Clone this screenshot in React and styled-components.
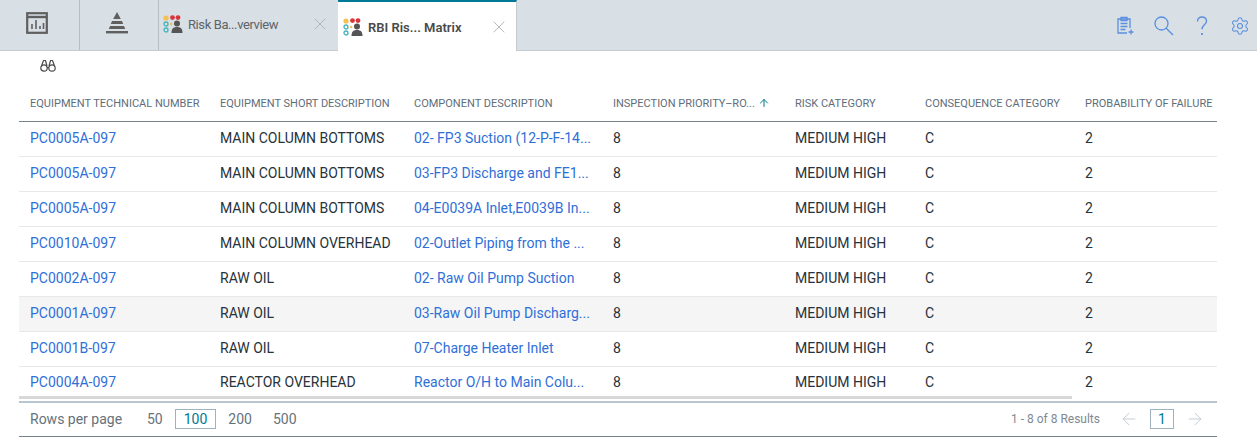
import React from 'react';
import styled, { createGlobalStyle } from 'styled-components';
import { X, ArrowLeft, ArrowRight, ArrowUp, Settings } from 'lucide-react';

const GlobalStyle = createGlobalStyle`
  html, body {
    margin: 0;
    padding: 0;
    background: #fff;
    font-family: Roboto, "Noto Sans", sans-serif;
  }
`;

const Page = styled.div`
  width: 1257px;
  height: 440px;
  overflow: hidden;
`;

const TabBar = styled.div`
  display: flex;
  height: 50px;
  background: #d8dfe5;
  border-bottom: 1px solid #c6cbcf;
`;

const IconTab = styled.div`
  width: ${p => p.$width}px;
  display: flex;
  align-items: center;
  justify-content: center;
  padding: 0 5px 4px 0;
  border-right: 1px solid #b9bdc0;
  color: #5f5f5f;
  box-sizing: border-box;
`;

const Tab = styled.div`
  display: flex;
  align-items: center;
  width: ${p => p.$width}px;
  height: ${p => (p.$active ? 51 : 50)}px;
  box-sizing: border-box;
  padding: ${p => (p.$active ? '1px 7px 0 5px' : '0 8px 2px 4px')};
  background: ${p => (p.$active ? '#fff' : 'transparent')};
  border-top: ${p => (p.$active ? '2px solid #007a94' : 'none')};
  border-right: ${p => (p.$active ? '1px solid #c6cbcf' : 'none')};
  color: ${p => (p.$active ? '#4a4a4a' : '#5d6468')};
  font-size: 13px;
  font-weight: ${p => (p.$active ? 600 : 400)};
  letter-spacing: ${p => (p.$active ? 0 : -0.4)}px;
`;

const TabTitle = styled.span`
  flex: 1;
  margin-left: 5px;
  white-space: nowrap;
`;

const TabClose = styled(X)`
  color: #a9adb0;
`;

const Actions = styled.div`
  margin-left: auto;
  display: flex;
  align-items: center;
  gap: 18px;
  padding: 1px 7px 0 0;
  color: #5b8fe0;
`;

const ToolRow = styled.div`
  height: 33px;
  padding: 7px 0 0 40px;
  box-sizing: border-box;
  color: #4a4a4a;
`;

const TableWrap = styled.div`
  margin-left: 19px;
  width: 1198px;
`;

const Table = styled.table`
  width: 1198px;
  table-layout: fixed;
  border-collapse: collapse;
`;

const HeadCell = styled.th`
  height: 37px;
  padding: 3px 0 0 11px;
  text-align: left;
  font-size: 11px;
  font-weight: 400;
  color: #5e6d7a;
  white-space: nowrap;
  border-bottom: 1px solid #77838c;
  box-sizing: border-box;
`;

const SortArrow = styled(ArrowUp)`
  color: #007a94;
  margin-left: 3px;
  vertical-align: -2px;
`;

const Row = styled.tr`
  background: ${p => (p.$hover ? '#f5f5f5' : '#fff')};
`;

const Cell = styled.td`
  height: ${p => (p.$last ? 30 : 35)}px;
  padding: ${p => (p.$last ? '2px 0 0 11px' : '0 0 2px 11px')};
  font-size: 14px;
  color: #27323a;
  white-space: nowrap;
  overflow: hidden;
  border-bottom: ${p => (p.$last ? 'none' : '1px solid #e6e8e9')};
  box-sizing: border-box;
`;

const LinkText = styled.span`
  color: #2f6fd8;
`;

const ScrollBar = styled.div`
  width: 1053px;
  height: 3px;
  background: #d8d8d8;
`;

const Footer = styled.div`
  display: flex;
  align-items: center;
  box-sizing: border-box;
  height: 36px;
  margin-top: 2px;
  padding: 0 12px 1px 11px;
  border-top: 2px solid #b9c6d0;
  border-bottom: 1px solid #70838f;
  font-size: 14px;
  color: #66727b;
`;

const PageSize = styled.span`
  box-sizing: border-box;
  height: 20px;
  line-height: 18px;
  padding: 0 8px;
  margin-right: 3px;
  border: 1px solid ${p => (p.$active ? '#9fb1bd' : 'transparent')};
  color: ${p => (p.$active ? '#007a94' : '#66727b')};
`;

const RowsLabel = styled.span`
  width: 108px;
`;

const Results = styled.span`
  margin-left: auto;
  margin-right: 19px;
  font-size: 12px;
  color: #808a92;
`;

const PageNum = styled.span`
  box-sizing: border-box;
  width: 24px;
  height: 20px;
  line-height: 18px;
  margin: 0 11px;
  text-align: center;
  color: #007a94;
  border: 1px solid #9fb1bd;
`;

const PageArrow = styled.span`
  display: flex;
  color: #c0c8ce;
`;

const columns = [
  { title: 'EQUIPMENT TECHNICAL NUMBER', width: 190 },
  { title: 'EQUIPMENT SHORT DESCRIPTION', width: 194 },
  { title: 'COMPONENT DESCRIPTION', width: 199 },
  { title: 'INSPECTION PRIORITY–RO...', width: 182, sorted: true },
  { title: 'RISK CATEGORY', width: 130 },
  { title: 'CONSEQUENCE CATEGORY', width: 160 },
  { title: 'PROBABILITY OF FAILURE', width: 143 }
];

const rows = [
  ['PC0005A-097', 'MAIN COLUMN BOTTOMS', '02- FP3 Suction (12-P-F-14...'],
  ['PC0005A-097', 'MAIN COLUMN BOTTOMS', '03-FP3 Discharge and FE1...'],
  ['PC0005A-097', 'MAIN COLUMN BOTTOMS', '04-E0039A Inlet,E0039B In...'],
  ['PC0010A-097', 'MAIN COLUMN OVERHEAD', '02-Outlet Piping from the ...'],
  ['PC0002A-097', 'RAW OIL', '02- Raw Oil Pump Suction'],
  ['PC0001A-097', 'RAW OIL', '03-Raw Oil Pump Discharg...'],
  ['PC0001B-097', 'RAW OIL', '07-Charge Heater Inlet'],
  ['PC0004A-097', 'REACTOR OVERHEAD', 'Reactor O/H to Main Colu...']
];

const ReportIcon = () => (
  <svg width="22" height="22" viewBox="0 0 22 22" fill="none" stroke="currentColor">
    <rect x="1.200" y="1.200" width="19.600" height="19.600" strokeWidth="2.200" />
    <path d="M1 5h20" strokeWidth="2.400" />
    <path d="M6 17v-5M10 17V8M14 17v-3M17.500 17v-6" strokeWidth="1.600" />
  </svg>
);

const PyramidIcon = () => (
  <svg width="24" height="22" viewBox="0 0 24 22" fill="currentColor">
    <path d="M12 0l3.800 7H8.200z" />
    <path d="M7 9h10l1.200 3H5.800z" />
    <path d="M5 14h14l1.200 3H3.800z" />
    <path d="M1 19h22v2.400H1z" />
  </svg>
);

const RiskIcon = () => (
  <svg width="20" height="18" viewBox="0 0 20 18">
    <circle cx="3" cy="3" r="2.600" fill="#f2c14e" />
    <circle cx="9.500" cy="2.600" r="2.400" fill="#d9343a" />
    <circle cx="15" cy="2.600" r="2.400" fill="#d9343a" />
    <circle cx="3" cy="9" r="2" fill="none" stroke="#45b5bd" strokeWidth="1.300" />
    <circle cx="3" cy="15" r="2" fill="none" stroke="#45b5bd" strokeWidth="1.300" />
    <circle cx="8.200" cy="9" r="1.300" fill="#f2c14e" />
    <circle cx="14" cy="8.500" r="3" fill="#555" />
    <path d="M8.500 18c0-4 1.500-6 5.500-6s5.500 2 5.500 6z" fill="#555" />
  </svg>
);

const BinocularsIcon = () => (
  <svg width="16" height="14" viewBox="0 0 16 14" fill="none" stroke="currentColor" strokeWidth="1.200">
    <circle cx="4" cy="9" r="3.200" />
    <circle cx="12" cy="9" r="3.200" />
    <path d="M1.500 7L3.500 1.500h2L7 7M9 7l1.500-5.500h2L14.500 7M7 8.500h2" />
  </svg>
);

const NotesPlusIcon = () => (
  <svg width="20" height="20" viewBox="0 0 20 20" fill="none" stroke="currentColor" strokeWidth="1.300">
    <path d="M11 17H2V3h12v9" />
    <path d="M5 1.500h6v3H5zM4.500 7.500h7M4.500 10.500h7M4.500 13.500h5M15 13.500v5M12.500 16h5" />
  </svg>
);

const SearchIcon = () => (
  <svg width="20" height="20" viewBox="0 0 20 20" fill="none" stroke="currentColor" strokeWidth="1.300">
    <circle cx="7.500" cy="7.500" r="6.500" />
    <path d="M12.200 12.200L19 19" />
  </svg>
);

const QuestionIcon = () => (
  <svg width="20" height="22" viewBox="0 0 20 22" fill="none" stroke="currentColor" strokeWidth="1.400">
    <path d="M5.500 6.500C5.500 3.500 7.500 2 10 2s4.500 1.600 4.500 4.200c0 3.600-4.500 3.800-4.500 8" />
    <path d="M10 18v2" strokeWidth="1.800" />
  </svg>
);

const App = () => (
  <Page>
    <GlobalStyle />
    <TabBar>
      <IconTab $width={80}><ReportIcon /></IconTab>
      <IconTab $width={79}><PyramidIcon /></IconTab>
      <Tab $width={179}>
        <RiskIcon />
        <TabTitle>Risk Ba...verview</TabTitle>
        <TabClose size={20} strokeWidth={1} />
      </Tab>
      <Tab $active $width={179}>
        <RiskIcon />
        <TabTitle>RBI Ris... Matrix</TabTitle>
        <TabClose size={20} strokeWidth={1} />
      </Tab>
      <Actions>
        <NotesPlusIcon />
        <SearchIcon />
        <QuestionIcon />
        <Settings size={20} strokeWidth={1.3} />
      </Actions>
    </TabBar>
    <ToolRow><BinocularsIcon /></ToolRow>
    <TableWrap>
      <Table>
        <colgroup>
          {columns.map(col => <col key={col.title} width={col.width} />)}
        </colgroup>
        <thead>
          <tr>
            {columns.map(col => (
              <HeadCell key={col.title}>
                {col.title}
                {col.sorted && <SortArrow size={12} strokeWidth={2} />}
              </HeadCell>
            ))}
          </tr>
        </thead>
        <tbody>
          {rows.map((row, i) => (
            <Row key={row[2]} $hover={i === 5}>
              <Cell $last={i === 7}><LinkText>{row[0]}</LinkText></Cell>
              <Cell $last={i === 7}>{row[1]}</Cell>
              <Cell $last={i === 7}><LinkText>{row[2]}</LinkText></Cell>
              <Cell $last={i === 7}>8</Cell>
              <Cell $last={i === 7}>MEDIUM HIGH</Cell>
              <Cell $last={i === 7}>C</Cell>
              <Cell $last={i === 7}>2</Cell>
            </Row>
          ))}
        </tbody>
      </Table>
      <ScrollBar />
      <Footer>
        <RowsLabel>Rows per page</RowsLabel>
        <PageSize>50</PageSize>
        <PageSize $active>100</PageSize>
        <PageSize>200</PageSize>
        <PageSize>500</PageSize>
        <Results>1 - 8 of 8 Results</Results>
        <PageArrow><ArrowLeft size={20} strokeWidth={1.1} /></PageArrow>
        <PageNum>1</PageNum>
        <PageArrow><ArrowRight size={20} strokeWidth={1.1} /></PageArrow>
      </Footer>
    </TableWrap>
  </Page>
);

export default App;
